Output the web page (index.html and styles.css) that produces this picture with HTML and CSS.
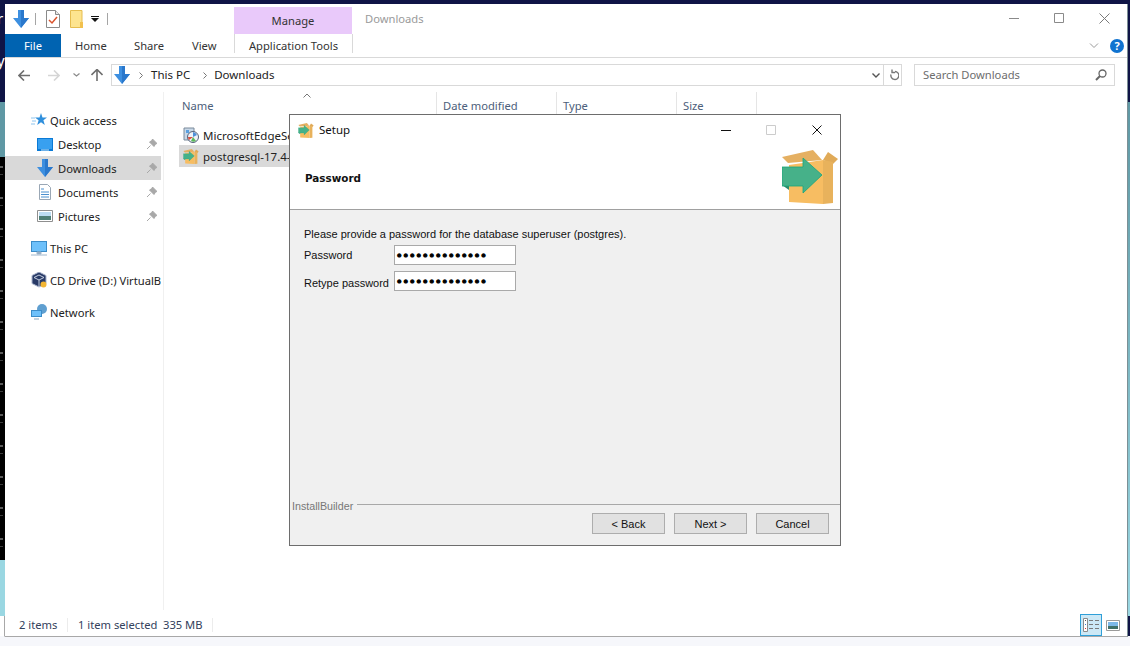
FILE: index.html
```html
<!DOCTYPE html>
<html lang="en">
<head>
<meta charset="utf-8"/>
<title>Downloads - Setup</title>
<link rel="stylesheet" href="styles.css">
</head>
<body>
<svg class="defs" width="0" height="0">
  <symbol id="down" viewBox="0 0 16 18">
    <path d="M5 0h6v8h5l-8 10L0 8h5z" fill="#3d8fe0"/>
    <path d="M8 0h3v8h5l-8 10z" fill="#2a78cc"/>
  </symbol>
  <symbol id="box" viewBox="0 0 56 54">
    <path d="M0 7 31 0l9 10L6 13z" fill="#e5b062"/>
    <path d="M41 10l5-8 10 7-5 5z" fill="#e0aa58"/>
    <path d="M7 15 41 10v44L7 52z" fill="#f7bd62"/>
    <path d="M41 10l10 2v41l-10 1z" fill="#e8b25c"/>
    <path d="M0 35h7v5z" fill="#2e8a6b"/>
    <path d="M0 17h21V8l19 17-19 18v-7H0z" fill="#46b189" stroke="#17a67c" stroke-width=".8"/>
  </symbol>
  <symbol id="pin-shape" viewBox="0 0 10 10">
    <path d="M5.500 0L10 4.500 8.500 5 7 7.500 2.500 3 5 1.500zM3.500 6.500L0 10" fill="#a8a8a8" stroke="#a8a8a8"/>
  </symbol>
</svg>

<div class="backdrop">
  <div class="strip navy"><span class="stray">r</span><span class="stray">y</span></div>
  <div class="strip teal"></div>
  <div class="strip black"></div>
  <div class="strip sky"></div>
  <div class="strip base"></div>
</div>
<div class="backdrop-right"></div>

<div class="explorer">
  <div class="titlebar">
    <div class="qat">
      <svg width="16" height="18"><use href="#down"/></svg>
      <span class="qat-sep"></span>
      <svg width="14" height="18" viewBox="0 0 14 18"><path d="M.5.5h9l4 4v13H.5z" fill="#fff" stroke="#8a8a8a"/><path d="M9.500.5v4h4" fill="#e8e8e8" stroke="#8a8a8a"/><path d="M3 10l3 3 5-6" fill="none" stroke="#d9532c" stroke-width="1.500"/></svg>
      <svg class="qat-folder" width="13" height="18" viewBox="0 0 13 18"><path d="M.5.5h11.500v17H.5z" fill="#fde48f" stroke="#e6bd4f"/><path d="M10 12h3v6h-3z" fill="#f2c14e"/></svg>
      <svg class="qat-more" width="8" height="6" viewBox="0 0 8 6"><path d="M0 0h8v1H0zM0 2h8L4 6z" fill="#111"/></svg>
      <span class="qat-sep"></span>
    </div>
    <div class="manage">Manage</div>
    <div class="win-title">Downloads</div>
    <div class="caption">
      <svg width="10" height="10" viewBox="0 0 10 10"><path d="M0 5.500h10" stroke="#8a8a8a"/></svg>
      <svg width="10" height="10" viewBox="0 0 10 10"><path d="M.5.500h9v9h-9z" fill="none" stroke="#8a8a8a"/></svg>
      <svg width="11" height="11" viewBox="0 0 11 11"><path d="M.5.500l10 10M10.500.500l-10 10" stroke="#7a7a7a"/></svg>
    </div>
  </div>

  <div class="tabs">
    <div class="tab file">File</div>
    <div class="tab home">Home</div>
    <div class="tab share">Share</div>
    <div class="tab view">View</div>
    <div class="tab tools">Application Tools</div>
    <div class="tabs-right">
      <svg width="10" height="6" viewBox="0 0 10 6"><path d="M1 .5l4 4 4-4" fill="none" stroke="#9a9a9a"/></svg>
      <span class="help">?</span>
    </div>
  </div>

  <div class="addressbar">
    <div class="nav-arrows">
      <svg width="12" height="11" viewBox="0 0 12 11"><path d="M6 .5l-5 5 5 5M1 5.500h11" fill="none" stroke="#6e6e6e" stroke-width="1.600"/></svg>
      <svg width="12" height="11" viewBox="0 0 12 11"><path d="M6 .5l5 5-5 5M11 5.500H0" fill="none" stroke="#d5d5d5" stroke-width="1.600"/></svg>
      <svg width="7" height="4" viewBox="0 0 7 4"><path d="M.5.500l3 2.500 3-2.500" fill="none" stroke="#8a8a8a" stroke-width="1.200"/></svg>
      <svg width="12" height="12" viewBox="0 0 12 12"><path d="M.5 6l5.500-5.500L11.500 6M6 1v11" fill="none" stroke="#6e6e6e" stroke-width="1.600"/></svg>
    </div>
    <div class="address">
      <svg width="16" height="18"><use href="#down"/></svg>
      <svg class="crumb-sep" width="4" height="7" viewBox="0 0 4 7"><path d="M.5.500l3 3-3 3" fill="none" stroke="#777"/></svg>
      <span class="crumb">This PC</span>
      <svg class="crumb-sep" width="4" height="7" viewBox="0 0 4 7"><path d="M.5.500l3 3-3 3" fill="none" stroke="#777"/></svg>
      <span class="crumb">Downloads</span>
      <div class="address-end">
        <svg width="8" height="5" viewBox="0 0 8 5"><path d="M.5.500L4 4 7.500.500" fill="none" stroke="#555" stroke-width="1.400"/></svg>
        <span class="address-div"></span>
        <svg width="11" height="12" viewBox="0 0 11 12"><path d="M6 2.500a4 4 0 1 1-4 3M3 .5v3h3" fill="none" stroke="#777" stroke-width="1.400" transform="translate(1 0)"/></svg>
      </div>
    </div>
    <div class="search">
      <span>Search Downloads</span>
      <svg width="12" height="12" viewBox="0 0 12 12"><circle cx="7.500" cy="4.500" r="3.500" fill="none" stroke="#666" stroke-width="1.300"/><path d="M5 7l-4 4" stroke="#666" stroke-width="2"/></svg>
    </div>
  </div>

  <div class="content">
    <nav class="sidebar">
      <div class="nav-item top">
        <svg width="16" height="14" viewBox="0 0 16 14"><path d="M10 0l1.500 4.500H16l-3.600 2.800L13.800 12 10 9.200 6.200 12l1.400-4.700L4 4.500h4.500z" fill="#2f8fdc"/><path d="M0 5h4M1 8h4M0 11h4" stroke="#8cc4ee"/></svg>
        <span>Quick access</span>
      </div>
      <div class="nav-item sub">
        <svg width="16" height="13" viewBox="0 0 16 13"><path d="M0 0h16v13H0z" fill="#0a7ad6"/><path d="M1 1h14v10H1z" fill="#38a0f0"/><path d="M4 12h8" stroke="#cfe8fb"/></svg>
        <span>Desktop</span><svg class="pin" width="10" height="10"><use href="#pin-shape"/></svg>
      </div>
      <div class="nav-item sub active">
        <svg width="16" height="18"><use href="#down"/></svg>
        <span>Downloads</span><svg class="pin" width="10" height="10"><use href="#pin-shape"/></svg>
      </div>
      <div class="nav-item sub">
        <svg width="16" height="16" viewBox="0 0 16 16"><path d="M2.500.5h8l3 3v12h-11z" fill="#fff" stroke="#9aa7b5"/><path d="M4 5h3M4 8h8M4 10.500h8M4 13h8" stroke="#4b90cf"/></svg>
        <span>Documents</span><svg class="pin" width="10" height="10"><use href="#pin-shape"/></svg>
      </div>
      <div class="nav-item sub">
        <svg width="16" height="12" viewBox="0 0 16 12"><path d="M.5.500h15v11H.5z" fill="#fff" stroke="#8f8f8f"/><path d="M2 2h12v4H2z" fill="#bcdcf2"/><path d="M2 6h12v4H2z" fill="#4f7f76"/></svg>
        <span>Pictures</span><svg class="pin" width="10" height="10"><use href="#pin-shape"/></svg>
      </div>
      <div class="nav-item top gap">
        <svg width="16" height="15" viewBox="0 0 16 15"><path d="M0 0h16v11H0z" fill="#3b8cc8"/><path d="M1 1h14v9H1z" fill="#6dc0fa"/><path d="M6 11h4v2H6zM0 14h16" fill="#8aa6c0" stroke="#9fb6cc"/></svg>
        <span>This PC</span>
      </div>
      <div class="nav-item top gap">
        <svg width="16" height="16" viewBox="0 0 16 16"><path d="M8 0l7 3.500v8L8 15l-7-3.500v-8z" fill="#283a66" stroke="#aab4cc"/><path d="M8 3L3 5.500l5 2.500 5-2.500zM8 8v7" fill="none" stroke="#c6cfe0"/><circle cx="12.500" cy="12.500" r="3" fill="#f3b634"/></svg>
        <span>CD Drive (D:) VirtualB</span>
      </div>
      <div class="nav-item top gap">
        <svg width="16" height="16" viewBox="0 0 16 16"><circle cx="11" cy="5" r="5" fill="#5f9fd0"/><path d="M0 6h11v7H0z" fill="#3b8cc8"/><path d="M1 7h9v5H1z" fill="#6dc0fa"/><path d="M3 15h5" stroke="#8aa6c0"/></svg>
        <span>Network</span>
      </div>
    </nav>

    <div class="files">
      <div class="sort-caret"><svg width="8" height="5" viewBox="0 0 8 5"><path d="M.5 4.500L4 1l3.500 3.500" fill="none" stroke="#777"/></svg></div>
      <div class="file-head">
        <span class="col-name">Name</span>
        <span class="col">Date modified</span>
        <span class="col">Type</span>
        <span class="col">Size</span>
      </div>
      <div class="file-row">
        <svg width="16" height="16" viewBox="0 0 16 16"><path d="M1 1h10v12H1z" fill="#c8d8e8" stroke="#7a8a9a"/><path d="M3 3h3v3H3z" fill="#5aa0e0"/><circle cx="10" cy="10" r="5.500" fill="#eef2f8" stroke="#54617a"/><path d="M10 10V5a5 5 0 0 1 4 3z" fill="#4e8fd8"/><path d="M10 10l-4 3a5 5 0 0 1-1-3z" fill="#d94f3f"/><path d="M10 10l3 4a5 5 0 0 1-5 0z" fill="#5cb85c"/></svg>
        <span>MicrosoftEdgeSetup</span>
      </div>
      <div class="file-row selected">
        <svg width="16" height="15" viewBox="0 0 56 54"><use href="#box"/></svg>
        <span>postgresql-17.4-1-windows</span>
      </div>
    </div>
  </div>

  <div class="statusbar">
    <span class="status-items">2 items</span>
    <span class="status-div"></span>
    <span class="status-sel">1 item selected</span>
    <span class="status-size">335 MB</span>
    <span class="status-div"></span>
    <div class="view-btns">
      <span class="view-btn on">
        <svg width="16" height="14" viewBox="0 0 16 14"><path d="M.5.500h4v13h-4z" fill="#fff" stroke="#8a8a8a"/><path d="M2 2h1v1H2z" fill="#555"/><path d="M2 6h1v1H2z" fill="#3a7fd0"/><path d="M2 10h1v1H2z" fill="#d33"/><path d="M6 2.500h4M12 2.500h4M6 6.500h4M12 6.500h4M6 10.500h4M12 10.500h4" stroke="#7a7a7a"/></svg>
      </span>
      <span class="view-btn large">
        <svg width="14" height="11" viewBox="0 0 14 11"><path d="M.5.500h13v10H.5z" fill="#fff" stroke="#9a9a9a"/><path d="M2 2h10v4H2z" fill="#7cb8e8"/><path d="M2 6h10v3H2z" fill="#3f7068"/></svg>
      </span>
    </div>
  </div>

  <!-- installer window sits on top of the explorer -->
  <div class="setup">
    <div class="setup-title">
      <svg width="16" height="15" viewBox="0 0 56 54"><use href="#box"/></svg>
      <span>Setup</span>
      <div class="setup-caption">
        <svg width="10" height="10" viewBox="0 0 10 10"><path d="M0 5.500h10" stroke="#111"/></svg>
        <svg width="10" height="10" viewBox="0 0 10 10"><path d="M.5.500h9v9h-9z" fill="none" stroke="#ccc"/></svg>
        <svg width="10" height="10" viewBox="0 0 10 10"><path d="M.5.500l9 9M9.500.500l-9 9" stroke="#111"/></svg>
      </div>
    </div>
    <div class="setup-head">
      <b>Password</b>
      <svg width="56" height="54"><use href="#box"/></svg>
    </div>
    <div class="setup-body">
      <p>Please provide a password for the database superuser (postgres).</p>
      <div class="pw-row"><label>Password</label><input type="password" value="aaaaaaaaaaaaaa" readonly/></div>
      <div class="pw-row"><label>Retype password</label><input type="password" value="aaaaaaaaaaaaaa" readonly/></div>
    </div>
    <div class="setup-foot">
      <div class="brand"><span>InstallBuilder</span><i></i></div>
      <div class="setup-btns">
        <button>&lt; Back</button>
        <button>Next &gt;</button>
        <button>Cancel</button>
      </div>
    </div>
  </div>
</div>
</body>
</html>
```
FILE: styles.css
```css
:root {
  --ui: "Noto Sans", sans-serif;
  --line: #d9d9d9;
  --text: #1e1e1e;
}

* {
  margin: 0;
  padding: 0;
  box-sizing: border-box;
}

html, body {
  width: 1130px;
  height: 646px;
  overflow: hidden;
  background: #f6f7fb;
}

body {
  position: relative;
  font-family: var(--ui);
  font-size: 11.200px;
  color: var(--text);
  padding: 4px 2px 9px 4px;
}

.defs {
  position: absolute;
}

/* desktop showing round the window */
.backdrop {
  position: absolute;
  top: 0; left: 0;
  width: 100%; height: 636px;
  display: flex;
  flex-direction: column;
  background: #0f1446;
}

.strip { overflow: hidden; }
.navy { height: 102px; background: #0f1446; display: flex; flex-direction: column; color: #fff; font-size: 15px; line-height: 20px; padding-top: 8px; }
.stray { height: 42px; margin-left: -3px; }
.teal { height: 55px; background: #5f98a4; }
/* the console behind is only a blur of grey flecks at this width */
.black {
  height: 403px;
  background:
    repeating-linear-gradient(to bottom, transparent 0 9px, #5a5a5a 9px 11px, transparent 11px 17px, #3c3c3c 17px 18px, transparent 18px 31px) 0 0 / 3px 100% no-repeat,
    #000;
}
.sky { height: 56px; background: #9ad7e2; }
.base { height: 20px; width: 5px; background: #fff; border-right: 1px solid #a8a8a8; }

.backdrop-right {
  position: absolute;
  top: 102px; right: 0;
  width: 2px; height: 514px;
  background: linear-gradient(to bottom, #5f98a4, #9ad7e2);
}

.explorer {
  position: relative;
  width: 1124px;
  height: 633px;
  background: #fff;
  border-left: 1px solid transparent;
  border-right: 1px solid #7c8f95;
  border-bottom: 1px solid #a8a8a8;
  background-clip: padding-box;
  display: flex;
  flex-direction: column;
}

/* title row */
.titlebar {
  height: 30px;
  display: flex;
  align-items: flex-start;
}

.qat {
  width: 229px;
  height: 30px;
  display: flex;
  align-items: center;
  padding-left: 8px;
}

.qat svg { flex: none; }
.qat-sep { width: 1px; height: 12px; background: #a5a5a5; margin: 0 10px 0 6px; }
.qat-folder { margin-left: 10px; }
.qat-more { margin-left: 8px; }
.qat-more + .qat-sep { margin-left: 8px; }

.manage {
  width: 118px;
  height: 27px;
  margin-top: 3px;
  background: #e9c9fa;
  text-align: center;
  line-height: 27px;
  color: #333;
}

.win-title {
  margin-left: 13px;
  line-height: 29px;
  color: #9a9a9a;
}

.caption {
  margin-left: auto;
  display: flex;
  gap: 35px;
  align-items: center;
  height: 28px;
  padding-right: 17px;
}

/* ribbon tabs */
.tabs {
  height: 24px;
  display: flex;
  border-bottom: 1px solid var(--line);
  position: relative;
}

.tab { line-height: 23px; color: #333; }
.file { width: 56px; background: #0063b1; color: #fff; text-align: center; }
.home { margin-left: 14px; width: 59px; }
.share { width: 58px; }
.view { width: 42px; }
.tools {
  width: 119px;
  height: 19px;
  text-align: center;
  border-left: 1px solid var(--line);
  border-right: 1px solid var(--line);
}

.tabs-right {
  margin-left: auto;
  display: flex;
  align-items: center;
  gap: 11px;
  padding-right: 3px;
}

.help {
  width: 14px;
  height: 14px;
  border-radius: 50%;
  background: #1073d0;
  color: #fff;
  font-size: 11px;
  font-weight: 700;
  line-height: 14px;
  text-align: center;
}

/* address row */
.addressbar {
  height: 34px;
  display: flex;
  align-items: flex-start;
  padding-top: 6px;
}

.nav-arrows {
  width: 106px;
  height: 22px;
  display: flex;
  align-items: center;
  padding-left: 13px;
}

.nav-arrows svg:nth-child(2) { margin-left: 18px; }
.nav-arrows svg:nth-child(3) { margin-left: 13px; }
.nav-arrows svg:nth-child(4) { margin-left: 11px; }

.address {
  width: 791px;
  height: 22px;
  border: 1px solid var(--line);
  display: flex;
  align-items: center;
  padding-left: 2px;
}

.crumb-sep { margin: 0 8px 0 9px; }
.crumb + .crumb-sep { margin: 0 7px 0 13px; }
.crumb { color: #222; font-size: 11.500px; margin-top: -2px; }

.address-end {
  margin-left: auto;
  display: flex;
  align-items: center;
  height: 20px;
}

.address-div { width: 1px; height: 20px; background: var(--line); margin: 0 4px 0 3px; }
.address-end svg:last-child { margin-right: 2px; }

.search {
  width: 201px;
  height: 22px;
  margin-left: 12px;
  border: 1px solid var(--line);
  display: flex;
  align-items: center;
  justify-content: space-between;
  padding: 0 7px 0 8px;
  color: #6d6d6d;
}

.search span { margin-top: -2px; }

/* main panes */
.content {
  flex: 1;
  display: flex;
  min-height: 0;
}

.sidebar {
  width: 159px;
  padding-top: 16px;
  border-right: 1px solid #f0f0f0;
  margin-bottom: 5px;
}

.nav-item {
  height: 24px;
  display: flex;
  align-items: center;
  white-space: nowrap;
  overflow: hidden;
  color: #222;
  width: 156px;
  position: relative;
}

.nav-item svg { flex: none; }
.nav-item.top { padding-left: 26px; gap: 3px; }
.nav-item.sub { padding-left: 32px; gap: 5px; }
.nav-item.gap { margin-top: 8px; }
.nav-item.active { background: #d9d9d9; }
.pin { position: absolute; right: 4px; top: 7px; }

.files {
  flex: 1;
  position: relative;
}

.sort-caret {
  position: absolute;
  left: 139px;
  top: 1px;
  line-height: 0;
}

.file-head {
  height: 24px;
  display: flex;
  line-height: 28px;
  color: #4c607a;
}

.col-name { width: 273px; padding-left: 18px; border-right: 1px solid #e5e5e5; }
.col { width: 120px; padding-left: 6px; border-right: 1px solid #e5e5e5; }
.col:last-child { width: 80px; }

.file-row {
  margin: 8px 0 0 15px;
  width: 258px;
  height: 22px;
  display: flex;
  align-items: center;
  gap: 4px;
  padding-left: 4px;
  white-space: nowrap;
  font-size: 11.500px;
  color: #222;
}

.file-row.selected { background: #d9d9d9; margin-top: -1px; }

/* status */
.statusbar {
  height: 21px;
  display: flex;
  align-items: center;
  padding: 0 0 2px 14px;
  color: #33415c;
  position: relative;
}

.status-div { width: 1px; height: 14px; background: #ececec; }
.status-items { width: 48px; }
.status-sel { margin-left: 10px; width: 85px; }
.status-size { width: 49px; }

.view-btns {
  position: absolute;
  right: 7px;
  bottom: 0;
  display: flex;
  align-items: center;
  gap: 4px;
}

.view-btn { display: flex; align-items: center; justify-content: center; width: 22px; height: 22px; }
.view-btn.large { width: 14px; }
.view-btn.on { background: #cce8f6; border: 1px solid #2f9fd8; }

/* setup dialog */
.setup {
  position: absolute;
  left: 284px;
  top: 110px;
  width: 552px;
  height: 432px;
  border: 1px solid #6d6d6d;
  background: #fff;
  display: flex;
  flex-direction: column;
  font-family: "Liberation Sans", sans-serif;
  font-size: 11px;
  color: #111;
}

.setup-title {
  height: 30px;
  display: flex;
  align-items: center;
  gap: 5px;
  padding-left: 8px;
  font-family: var(--ui);
  font-size: 11.500px;
}

.setup-title span { margin-top: -2px; }

.setup-caption {
  margin-left: auto;
  display: flex;
  gap: 35px;
  padding-right: 18px;
}

.setup-caption svg:last-child { margin-left: 1px; }

.setup-head {
  height: 65px;
  display: flex;
  justify-content: space-between;
  padding: 5px 2px 0 15px;
  border-bottom: 1px solid #a0a0a0;
}

.setup-head b { line-height: 56px; font-size: 10.400px; font-family: "DejaVu Sans", sans-serif; }

.setup-body {
  flex: 1;
  background: #f0f0f0;
  padding: 17px 14px 0;
}

.setup-body p { height: 18px; line-height: 14px; }

.pw-row {
  display: flex;
  align-items: center;
  height: 20px;
  margin-bottom: 6px;
}

.pw-row label { width: 90px; }
.pw-row + .pw-row label { margin-top: 4px; }

.pw-row input {
  width: 122px;
  height: 20px;
  border: 1px solid #a9a9a9;
  background: #fff;
  padding-left: 1px;
  font-family: "DejaVu Sans", sans-serif;
  font-size: 11px;
  color: #000;
  -webkit-text-stroke: 1.200px #000;
  outline: none;
}

.setup-foot {
  height: 42px;
  background: #f0f0f0;
}

.brand {
  display: flex;
  align-items: center;
  gap: 4px;
  padding-left: 2px;
  height: 6px;
  color: #777;
  font-size: 10.700px;
}

.brand i { flex: 1; height: 1px; background: #a8a8a8; align-self: flex-start; margin-top: 1px; }

.setup-btns {
  display: flex;
  justify-content: flex-end;
  gap: 9px;
  padding: 4px 11px 0 0;
}

.setup-btns button {
  width: 73px;
  height: 21px;
  background: #e1e1e1;
  border: 1px solid #adadad;
  font-family: "Liberation Sans", sans-serif;
  font-size: 11px;
  color: #111;
}
```
